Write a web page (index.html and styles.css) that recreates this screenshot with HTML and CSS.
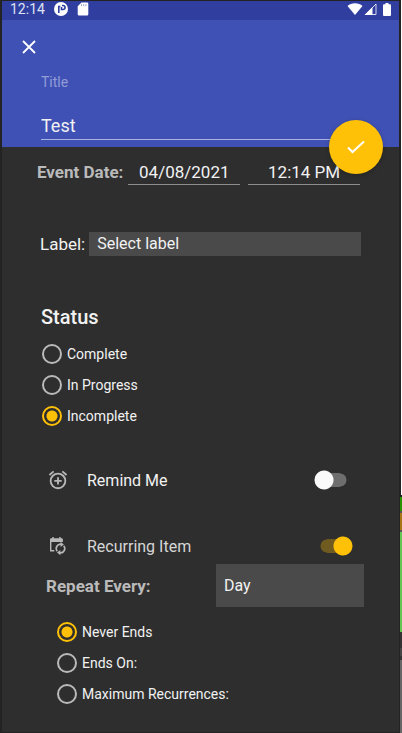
FILE: index.html
```html
<!DOCTYPE html>
<html lang="en">
<head>
<meta charset="utf-8">
<meta name="viewport" content="width=device-width, initial-scale=1">
<title>Edit event</title>
<link rel="stylesheet" href="styles.css">
</head>
<body>
<form class="phone">
  <div class="statusbar">
    <span>12:14</span>
    <svg class="status-app" width="14" height="14" viewBox="0 0 14 14"><circle cx="7" cy="7" r="7" fill="#fff"/><path d="M4.800 11V4.500h1.500M8 3.500h1a2 2 0 0 1 0 4H7.500V5" fill="none" stroke="#303f9f" stroke-width="1.600"/></svg>
    <svg class="status-card" width="12" height="14" viewBox="0 0 12 14"><path d="M4.500.5H10a1.300 1.300 0 0 1 1.300 1.300v10.400a1.300 1.300 0 0 1-1.300 1.300H2a1.300 1.300 0 0 1-1.300-1.300V4.300z" fill="#fff"/><path d="M4.500 2.200v2M6.700 2.200v2M8.900 2.200v2" stroke="#8e97cc" stroke-width=".9"/></svg>
    <svg class="status-wifi" width="16" height="12" viewBox="0 0 16 12"><path d="M8 12 .5 3C2.500 1.200 5 .2 8 .2s5.500 1 7.500 2.800z" fill="#fff"/></svg>
    <svg class="status-signal" width="13" height="12" viewBox="0 0 13 12"><path d="M.5 12 8.500 4v8z" fill="#fff"/><path d="M1.500 11.500 12 1v10.500z" fill="none" stroke="#fff" stroke-opacity=".8"/></svg>
    <svg class="status-battery" width="8" height="13" viewBox="0 0 8 13"><path d="M2.500 0h3v1.200H7a1 1 0 0 1 1 1V12a1 1 0 0 1-1 1H1a1 1 0 0 1-1-1V2.200a1 1 0 0 1 1-1h1.500z" fill="#fff"/></svg>
  </div>

  <header class="header">
    <button class="close" type="button" aria-label="Close"><svg width="14" height="14" viewBox="0 0 14 14"><path d="m1 1 12 12M13 1 1 13" stroke="#fff" stroke-width="1.800"/></svg></button>
    <div class="title-field">
      <label for="title">Title</label>
      <input id="title" type="text" value="Test">
    </div>
    <button class="fab" type="submit" aria-label="Save"><svg width="20" height="16" viewBox="0 0 20 16"><path d="m2 8.500 4.500 4.500L18 2.500" fill="none" stroke="#fff" stroke-width="2"/></svg></button>
  </header>

  <main>
    <div class="event-row">
      <label class="strong" for="date">Event Date:</label>
      <input id="date" type="text" value="04/08/2021">
      <input type="text" value="12:14 PM" aria-label="Event time">
    </div>

    <div class="label-row">
      <label for="label">Label:</label>
      <select id="label"><option>Select label</option></select>
    </div>

    <h2>Status</h2>
    <div class="radios">
      <label><input type="radio" name="status">Complete</label>
      <label><input type="radio" name="status">In Progress</label>
      <label><input type="radio" name="status" checked>Incomplete</label>
    </div>

    <div class="toggle-row remind">
      <svg width="22" height="22" viewBox="0 0 24 24"><path fill="#b8b8b8" d="M7.880 3.390 6.600 1.860 2 5.710l1.290 1.530zM22 5.720l-4.600-3.860-1.290 1.530 4.600 3.860zM12 4a9 9 0 1 0 .001 18.001A9 9 0 0 0 12 4zm0 16a7 7 0 1 1 0-14 7 7 0 0 1 0 14zm1-11h-2v3H8v2h3v3h2v-3h3v-2h-3z"/></svg>
      <label for="remind">Remind Me</label>
      <input class="switch" id="remind" type="checkbox" role="switch">
    </div>
    <div class="toggle-row recurring">
      <svg width="22" height="22" viewBox="0 0 22 22"><path fill="#b8b8b8" d="M4.300 3.300H5.300V2h1.500v1.300h5.400V2h1.500v1.300h1a1.200 1.200 0 0 1 1.200 1.200V7H3V4.500a1.200 1.200 0 0 1 1.300-1.200z"/><path d="M3.700 7v8.800h3.600" fill="none" stroke="#b8b8b8" stroke-width="1.400"/><path d="M10.300 16.300a4.300 4.300 0 0 1 4.200-7M16.700 10.700a4.300 4.300 0 0 1-4.200 7" fill="none" stroke="#b8b8b8" stroke-width="1.600"/><path d="m13.500 6.900 3.400 2.500-3.400 2.500zM13.400 15v5.200L10 17.600z" fill="#b8b8b8"/></svg>
      <label for="recurring">Recurring Item</label>
      <input class="switch" id="recurring" type="checkbox" role="switch" checked>
    </div>

    <div class="repeat-row">
      <label class="strong" for="repeat">Repeat Every:</label>
      <select id="repeat"><option>Day</option></select>
    </div>
    <div class="radios ends">
      <label><input type="radio" name="ends" checked>Never Ends</label>
      <label><input type="radio" name="ends">Ends On:</label>
      <label><input type="radio" name="ends">Maximum Recurrences:</label>
    </div>
  </main>
</form>
<div class="edge" aria-hidden="true"></div>
</body>
</html>
```
FILE: styles.css
```css
* { box-sizing: border-box; }

body {
  margin: 0;
  min-height: 100vh;
  display: flex;
  background: #232323;
  color: #f2f2f2;
  font-family: Roboto, sans-serif;
  font-size: 17px;
}

input, select, button {
  margin: 0;
  padding: 0;
  border: 0;
  border-radius: 0;
  outline: 0;
  background: none;
  color: inherit;
  font: inherit;
}

svg { display: block; flex: none; }

.phone {
  flex: 1;
  min-width: 0;
  border: solid #232323;
  border-width: 1px 1px 1px 2px;
  background: #2e2e2e;
}

/* Strip of the desktop visible beside the emulator */
.edge {
  width: 2px;
  background: linear-gradient(#232323 0 0) 0 0 / 1px 495px no-repeat,
    linear-gradient(#fff 495px, #232323 495px 497px, #299400 497px 511px,
      #555 511px 513px, #a87516 513px 530px, #555 530px 532px,
      #62c653 532px 632px, #333 632px 648px, #444 648px 656px,
      #333 656px 660px, #666 660px);
}

.statusbar {
  display: flex;
  align-items: center;
  height: 19px;
  padding: 0 8px 3px;
  background: #303f9f;
  color: #dfe2f2;
  font-size: 14px;
  line-height: 16px;
}
.status-app { margin-left: 9px; }
.status-card { margin-left: 9px; }
.status-wifi { margin-left: auto; }
.status-signal { margin-left: 1px; }
.status-battery { margin-left: 6px; }

.header {
  position: relative;
  height: 127px;
  padding: 16px 38px 0 39px;
  background: #4051b5;
}
.close {
  display: grid;
  place-items: center;
  width: 22px;
  height: 22px;
  margin-left: -23px;
}
.title-field label {
  display: block;
  margin-top: 16px;
  color: #929cd5;
  font-size: 14px;
  line-height: 16px;
}
.title-field input {
  display: block;
  width: 100%;
  height: 27px;
  margin-top: 23px;
  padding-bottom: 1px;
  border-bottom: 1px solid #aab2df;
  font-size: 18px;
}
.fab {
  position: absolute;
  right: 16px;
  bottom: -27px;
  display: grid;
  place-items: center;
  width: 54px;
  height: 54px;
  border-radius: 50%;
  background: #ffc107;
  box-shadow: 0 1px 4px rgb(0 0 0 / 25%);
}

.strong { color: #bababa; font-weight: 700; }

.event-row {
  display: flex;
  gap: 8px;
  padding: 12px 39px 0 35px;
  line-height: 26px;
}
.event-row label { margin-right: -3px; }
.event-row input {
  flex: 1;
  min-width: 0;
  height: 26px;
  border-bottom: 1px solid #8d8d8d;
  text-align: center;
}

select {
  appearance: none;
  flex: 1;
  padding: 0 8px;
  border-radius: 0;
  background: #4a4a4a;
  font-size: 16px;
}

.label-row {
  display: flex;
  gap: 4px;
  margin-top: 47px;
  padding: 0 38px 0 38px;
  line-height: 24px;
}

h2 {
  margin: 49px 39px 9px;
  font-size: 20px;
  font-weight: 500;
  line-height: 24px;
}

.radios { padding-left: 40px; }
.radios label {
  display: flex;
  align-items: center;
  gap: 5px;
  height: 31px;
  font-size: 14px;
}
.radios input {
  appearance: none;
  width: 20px;
  height: 20px;
  border: 2px solid #bababa;
  border-radius: 50%;
}
.radios input:checked {
  border-color: #ffc107;
  background: radial-gradient(circle, #ffc107 5px, transparent 6px);
}

.toggle-row {
  display: flex;
  align-items: center;
  height: 34px;
  margin-top: 32px;
  padding-left: 45px;
  font-size: 16px;
}
.toggle-row label { flex: 1; margin-left: 18px; }
.remind { padding-right: 52px; }
.recurring { padding-right: 46px; color: #d6d6d6; }

.switch {
  appearance: none;
  width: 33px;
  height: 20px;
  border-radius: 10px;
  background:
    radial-gradient(circle at 10px 10px, #fafafa 9px, transparent 10px),
    linear-gradient(#6e6e6e 0 0) 10px 3px / 16px 14px no-repeat,
    radial-gradient(circle at 26px 10px, #6e6e6e 6px, transparent 7px);
}
.switch:checked {
  background:
    radial-gradient(circle at 23px 10px, #ffc107 9px, transparent 10px),
    linear-gradient(#6f5a20 0 0) 7px 3px / 16px 14px no-repeat,
    radial-gradient(circle at 7px 10px, #6f5a20 6px, transparent 7px);
}

.repeat-row {
  display: flex;
  align-items: center;
  justify-content: space-between;
  margin-top: 1px;
  padding: 0 35px 0 44px;
}
.repeat-row select { flex: 0 1 148px; height: 43px; }
.ends { margin-top: 9px; padding-left: 55px; }
```
